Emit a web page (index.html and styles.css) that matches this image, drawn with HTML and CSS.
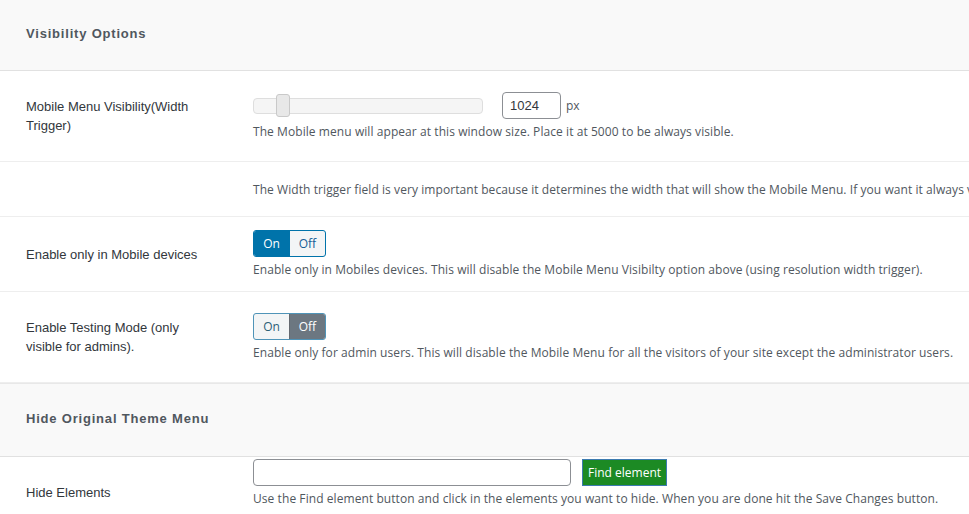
FILE: index.html
```html
<!DOCTYPE html>
<html lang="en">
<head>
  <meta charset="UTF-8" />
  <meta name="viewport" content="width=device-width, initial-scale=1.0" />
  <title>Visibility Options</title>
  <link rel="stylesheet" href="styles.css">
</head>
<body>
  <div class="settings">
    <div class="section-head">Visibility Options</div>

    <div class="row">
      <div class="label">Mobile Menu Visibility(Width Trigger)</div>
      <div class="field">
        <div class="controls">
          <div class="slider"><span class="thumb"></span></div>
          <input class="num" type="text" value="1024">
          <span class="unit">px</span>
        </div>
        <p class="desc">The Mobile menu will appear at this window size. Place it at 5000 to be always visible.</p>
      </div>
    </div>

    <div class="row">
      <div class="label"></div>
      <div class="field">
        <p class="desc flat">The Width trigger field is very important because it determines the width that will show the Mobile Menu. If you want it always visible set it to 5000.</p>
      </div>
    </div>

    <div class="row">
      <div class="label">Enable only in Mobile devices</div>
      <div class="field">
        <div class="toggle">
          <span class="opt on">On</span><span class="opt">Off</span>
        </div>
        <p class="desc">Enable only in Mobiles devices. This will disable the Mobile Menu Visibilty option above (using resolution width trigger).</p>
      </div>
    </div>

    <div class="row">
      <div class="label">Enable Testing Mode (only visible for admins).</div>
      <div class="field">
        <div class="toggle off-state">
          <span class="opt">On</span><span class="opt on">Off</span>
        </div>
        <p class="desc">Enable only for admin users. This will disable the Mobile Menu for all the visitors of your site except the administrator users.</p>
      </div>
    </div>

    <div class="section-head second">Hide Original Theme Menu</div>

    <div class="row last">
      <div class="label">Hide Elements</div>
      <div class="field">
        <div class="controls">
          <input class="text-input" type="text" value="">
          <button class="find-btn">Find element</button>
        </div>
        <p class="desc">Use the Find element button and click in the elements you want to hide. When you are done hit the Save Changes button.</p>
      </div>
    </div>
  </div>
</body>
</html>
```

FILE: styles.css
```css
html, body {
  margin: 0;
  padding: 0;
  background: #fff;
  overflow: hidden;
}
body {
  font-family: "Liberation Sans", Arial, sans-serif;
  font-size: 13px;
  color: #32373c;
}
.settings {
  width: 1300px;
}
.section-head {
  height: 70px;
  line-height: 68px;
  padding-left: 26px;
  background: #f9f9f9;
  border-bottom: 1px solid #e1e1e1;
  font-weight: bold;
  font-size: 13px;
  letter-spacing: 0.8px;
  color: #50575e;
}
.section-head.second {
  height: 72px;
  line-height: 70px;
  border-top: 1px solid #e8e8e8;
}
.row {
  display: grid;
  grid-template-columns: 227px 1fr;
  align-items: center;
  padding-left: 26px;
  border-bottom: 1px solid #eeeeee;
}
.label {
  padding: 26px 0;
  width: 178px;
  line-height: 19px;
  color: #32373c;
}
.label:empty {
  height: 2px;
}
.field {
  padding: 13px 0;
}
.row.last {
  border-bottom: none;
}
.row.last .field {
  align-self: start;
  padding-top: 2px;
}
.controls {
  display: flex;
  align-items: center;
  height: 27px;
}
.slider {
  position: relative;
  width: 228px;
  height: 14px;
  background: #f5f5f5;
  border: 1px solid #dedede;
  border-radius: 4px;
}
.thumb {
  position: absolute;
  left: 22px;
  top: -5px;
  width: 12px;
  height: 21px;
  background: #e8e8e8;
  border: 1px solid #c9c9c9;
  border-radius: 3px;
}
.num {
  margin-left: 19px;
  width: 59px;
  height: 27px;
  box-sizing: border-box;
  padding: 0 7px;
  border: 1px solid #8c8f94;
  border-radius: 4px;
  font-family: "Liberation Sans", Arial, sans-serif;
  font-size: 13px;
  color: #32373c;
}
.unit {
  margin-left: 5px;
  font-family: "Open Sans", sans-serif;
  font-size: 12px;
  color: #50575e;
}
.desc {
  margin: 4px 0 0;
  line-height: 17px;
  font-family: "Open Sans", sans-serif;
  font-size: 12px;
  letter-spacing: 0.07px;
  color: #50575e;
  white-space: nowrap;
}
.desc.flat {
  margin: 0;
}
.toggle {
  display: inline-flex;
  height: 27px;
  box-sizing: border-box;
  border: 1px solid #0073aa;
  border-radius: 3px;
  overflow: hidden;
  background: #f3f5f6;
}
.opt {
  width: 35px;
  line-height: 25px;
  text-align: center;
  font-family: "Open Sans", sans-serif;
  font-size: 12px;
  color: #135e96;
}
.opt + .opt {
  border-left: 1px solid #0073aa;
}
.opt.on {
  background: #0073aa;
  color: #fff;
}
.toggle.off-state {
  border-color: #4f94b8;
}
.toggle.off-state .opt {
  color: #2c5f77;
}
.toggle.off-state .opt + .opt {
  border-left-color: #646970;
}
.toggle.off-state .opt.on {
  background: #6c7781;
  color: #fff;
}
.text-input {
  width: 318px;
  height: 27px;
  box-sizing: border-box;
  border: 1px solid #8c8f94;
  border-radius: 4px;
}
.find-btn {
  margin-left: 11px;
  height: 27px;
  padding: 0 5px;
  background: #1c8a24;
  border: 1px solid #3c7bb0;
  color: #fff;
  font-family: "Open Sans", sans-serif;
  font-size: 12px;
  cursor: pointer;
}
```
